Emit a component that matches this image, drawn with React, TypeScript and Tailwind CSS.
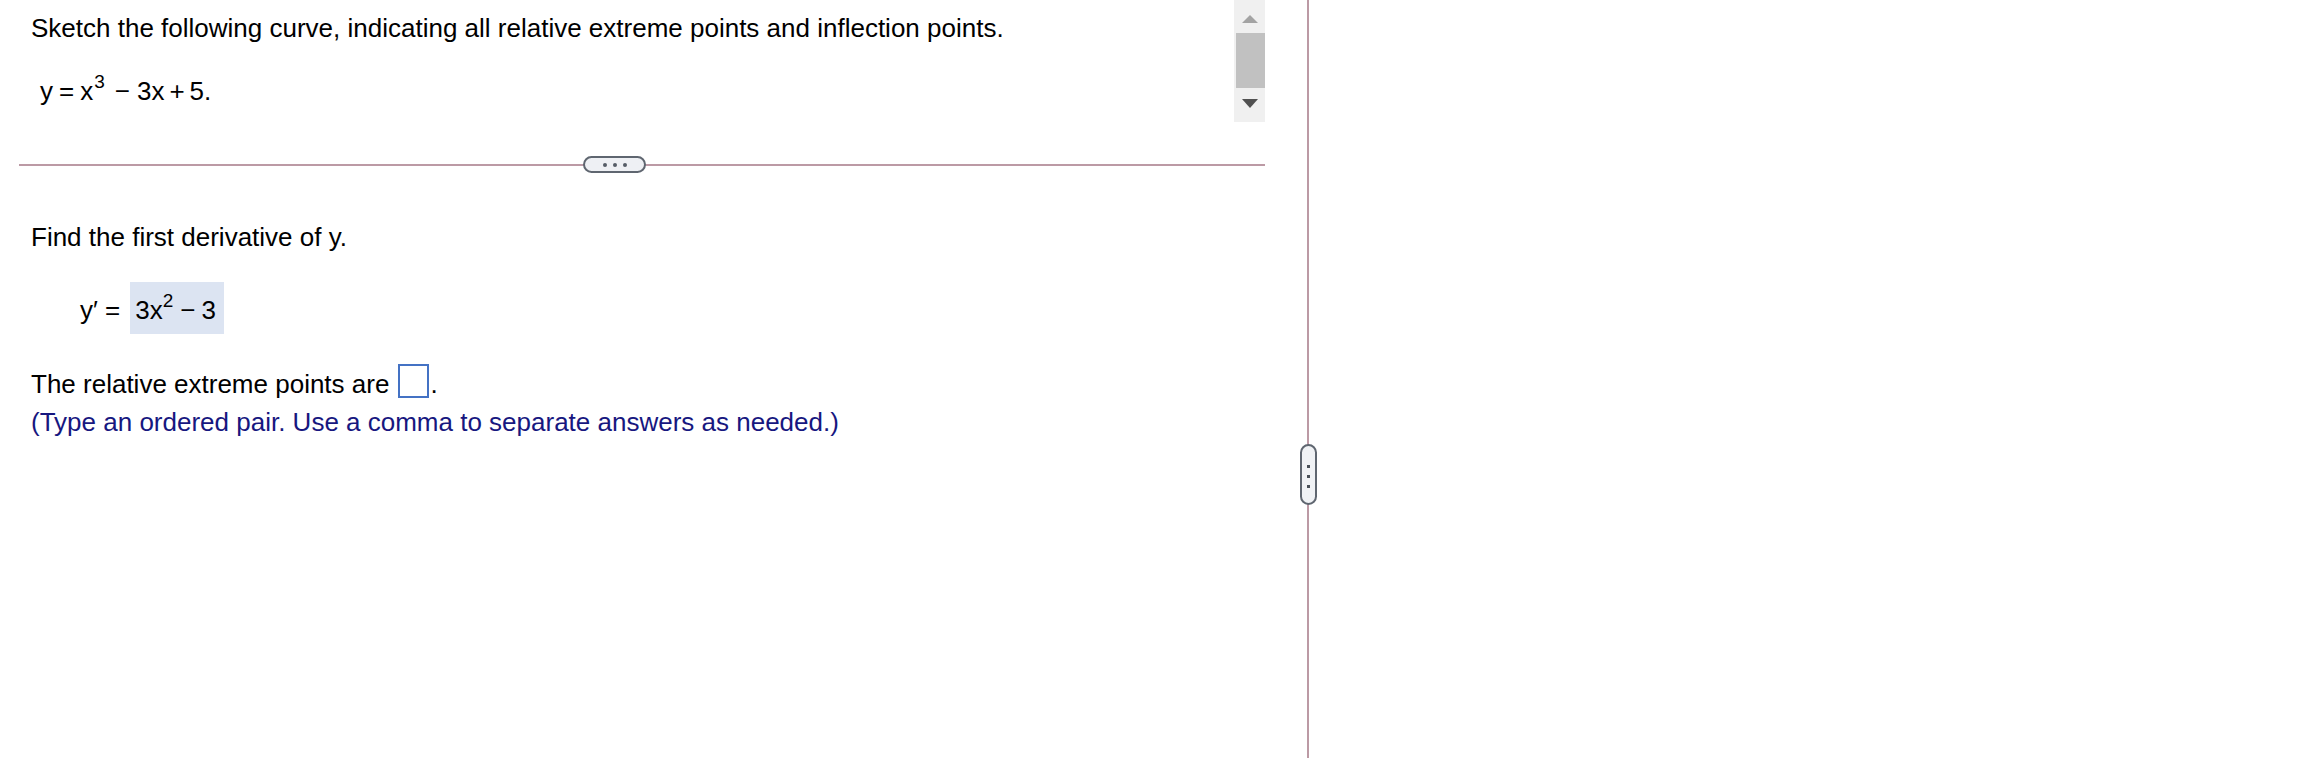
const font = { fontFamily: '"Liberation Sans", Arial, sans-serif' };

const Scrollbar = () => (
  <div className="w-[31px] h-[122px] bg-[#f0f0f0] flex flex-col">
    <div className="h-[33px] flex items-center justify-center pt-[4px]">
      <svg width="16" height="8" viewBox="0 0 16 8">
        <polygon points="8,0 16,8 0,8" fill="#a3a3a3" />
      </svg>
    </div>
    <div className="h-[55px] ml-[2px] bg-[#c1c1c1]" />
    <div className="flex-1 flex items-center justify-center pb-[3px]">
      <svg width="16" height="9" viewBox="0 0 16 9">
        <polygon points="0,0 16,0 8,9" fill="#505050" />
      </svg>
    </div>
  </div>
);

const App = () => {
  return (
    <div className="relative flex h-[758px] w-full bg-white text-black" style={font}>
      <div className="w-[1307px] flex flex-col">
        <div className="flex h-[122px]">
          <div className="flex-1 pl-[31px]">
            <p className="pt-[13px] text-[26px] leading-[30px]">
              Sketch the following curve, indicating all relative extreme points and inflection points.
            </p>
            <div className="mt-[33px] ml-[9px] text-[26px] leading-[30px] whitespace-nowrap">
              <span>y</span>
              <span className="ml-[6px]">=</span>
              <span className="ml-[6px]">x</span>
              <span className="relative -top-[12px] ml-[1px] text-[19px]">3</span>
              <span className="ml-[10px]">−</span>
              <span className="ml-[7px]">3</span>
              <span>x</span>
              <span className="ml-[5px]">+</span>
              <span className="ml-[5px]">5</span>
              <span>.</span>
            </div>
          </div>
          <Scrollbar />
          <div className="w-[42px]" />
        </div>

        <div className="relative mt-[42px] ml-[19px] mr-[42px] h-[2px] bg-[#bc9aa5]">
          <div className="absolute left-[564px] -top-[8px] w-[63px] h-[17px] rounded-full border-2 border-[#5f6670] bg-[#eef0f4] flex items-center justify-center gap-[6px]">
            <span className="w-[4px] h-[4px] rounded-full bg-[#555d66]" />
            <span className="w-[4px] h-[4px] rounded-full bg-[#555d66]" />
            <span className="w-[4px] h-[4px] rounded-full bg-[#555d66]" />
          </div>
        </div>

        <div className="pl-[31px] text-[26px] leading-[30px]">
          <p className="mt-[56px]">Find the first derivative of y.</p>

          <div className="mt-[30px] ml-[49px] flex items-start whitespace-nowrap">
            <span className="pt-[13px]">y′ =</span>
            <span className="ml-[10px] w-[94px] h-[52px] pl-[5px] pt-[13px] bg-[#dce4f2]">
              3x<span className="relative -top-[12px] text-[19px]">2</span>
              <span className="ml-[7px]">−</span>
              <span className="ml-[6px]">3</span>
            </span>
          </div>

          <div className="mt-[30px] flex items-start whitespace-nowrap">
            <span className="mt-[5px]">The relative extreme points are</span>
            <span className="ml-[9px] w-[31px] h-[34px] border-2 border-[#4472c4] bg-white" />
            <span className="mt-[5px] ml-[1px]">.</span>
          </div>

          <p className="mt-[8px] text-[#17177f]">
            (Type an ordered pair. Use a comma to separate answers as needed.)
          </p>
        </div>
      </div>

      <div className="w-[2px] h-full bg-[#bc9aa5]" />
      <div className="flex-1" />

      <div className="absolute left-[1300px] top-[444px] w-[17px] h-[61px] rounded-full border-2 border-[#5f6670] bg-[#f0f2f5] flex flex-col items-center justify-center gap-[7px] pt-[4px]">
        <span className="w-[3px] h-[3px] bg-[#4b525a]" />
        <span className="w-[3px] h-[3px] bg-[#4b525a]" />
        <span className="w-[3px] h-[3px] bg-[#4b525a]" />
      </div>
    </div>
  );
};

export default App;
